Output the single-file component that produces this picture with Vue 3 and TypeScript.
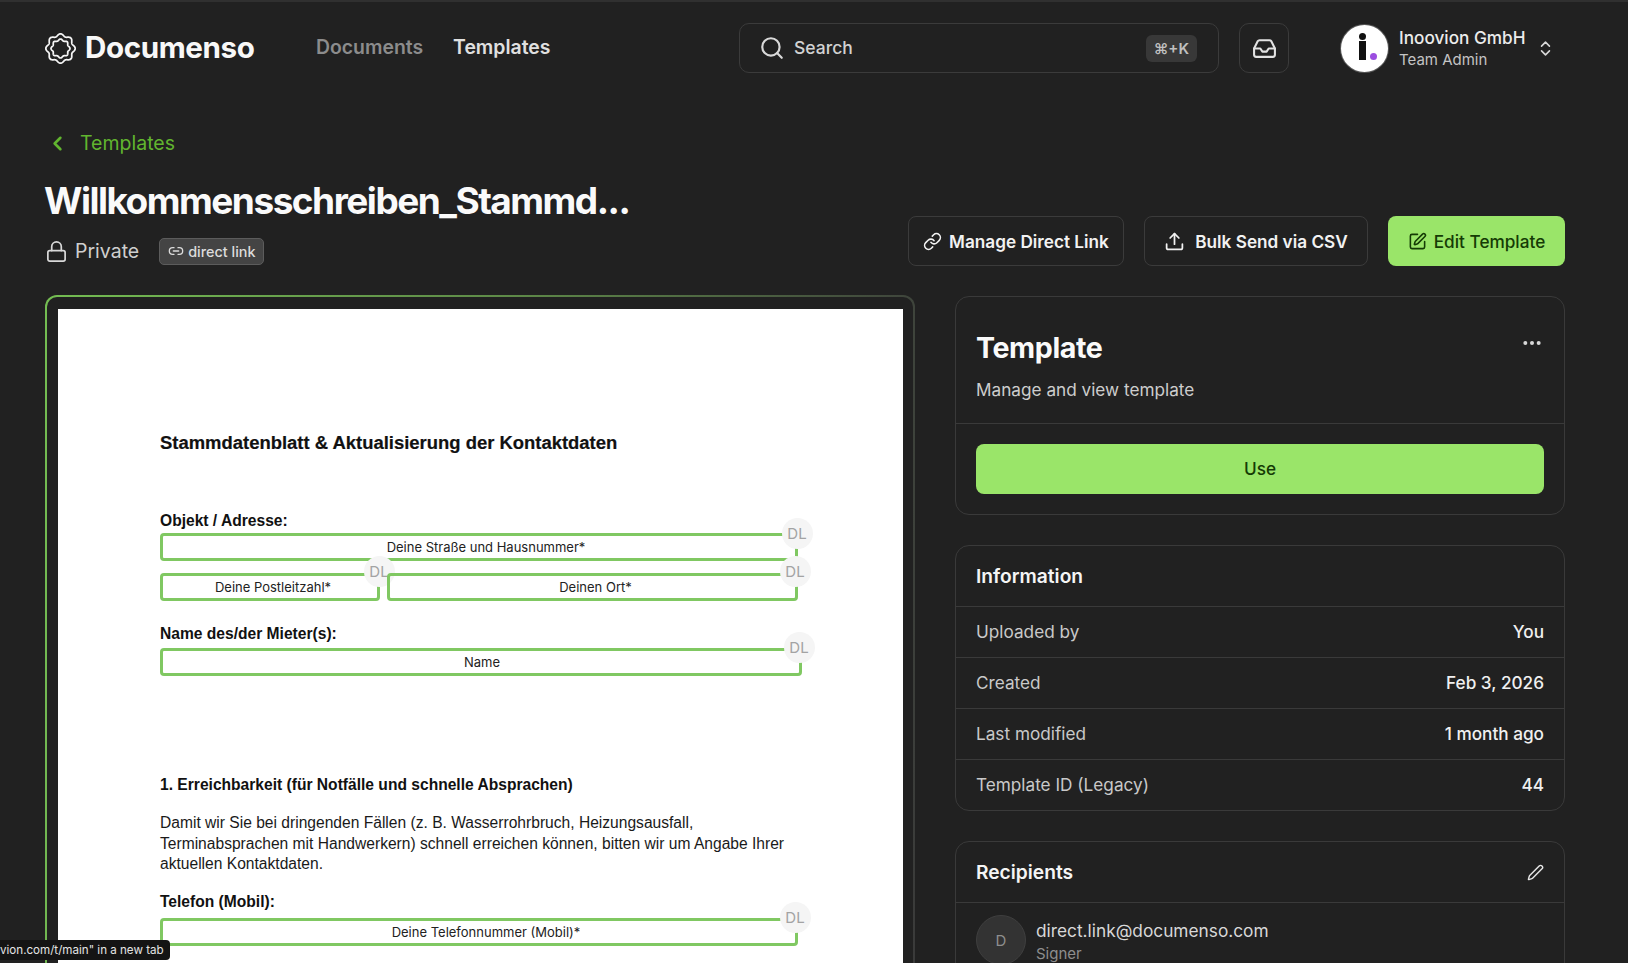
<script setup lang="ts">
interface InfoRow {
  label: string
  value: string
}

const infoRows: InfoRow[] = [
  { label: 'Uploaded by', value: 'You' },
  { label: 'Created', value: 'Feb 3, 2026' },
  { label: 'Last modified', value: '1 month ago' },
  { label: 'Template ID (Legacy)', value: '44' },
]

// wavy ring used by the logo
function wavyRing(radius: number, depth: number, lobes: number, phase = 0): string {
  const pts: string[] = []
  for (let i = 0; i < 180; i++) {
    const a = (i / 180) * Math.PI * 2
    const r = radius + depth * Math.cos(lobes * a + phase)
    pts.push(`${(16 + r * Math.sin(a)).toFixed(2)} ${(16 - r * Math.cos(a)).toFixed(2)}`)
  }
  return `M${pts.join('L')}Z`
}

const logoOuter = wavyRing(14, 1.2, 8)
const logoInner = wavyRing(9, 0.8, 8)
</script>

<template>
  <div class="page">
    <header class="header">
      <div class="brand">
        <svg class="logo" viewBox="0 0 32 32" fill="none" stroke="currentColor" stroke-width="1.8">
          <path :d="logoOuter" />
          <path :d="logoInner" />
        </svg>
        <span class="brand-name">Documenso</span>
      </div>
      <nav class="nav">
        <a class="nav-link muted">Documents</a>
        <a class="nav-link">Templates</a>
      </nav>
      <div class="search">
        <svg class="ico ico-search" viewBox="0 0 24 24"><circle cx="11" cy="11" r="8" /><path d="m21 21-4.3-4.3" /></svg>
        <span class="search-label">Search</span>
        <kbd class="kbd">⌘+K</kbd>
      </div>
      <button class="icon-btn">
        <svg class="ico ico-inbox" viewBox="0 0 24 24">
          <polyline points="22 12 16 12 14 15 10 15 8 12 2 12" />
          <path d="M5.45 5.11 2 12v6a2 2 0 0 0 2 2h16a2 2 0 0 0 2-2v-6l-3.45-6.89A2 2 0 0 0 16.76 4H7.24a2 2 0 0 0-1.79 1.11z" />
        </svg>
      </button>
      <div class="user">
        <div class="user-avatar">
          <span class="i-stem"></span>
          <span class="i-dot"></span>
          <span class="i-purple"></span>
        </div>
        <div class="user-text">
          <div class="user-name">Inoovion GmbH</div>
          <div class="user-role">Team Admin</div>
        </div>
        <svg class="ico ico-updown" viewBox="0 0 24 24"><path d="m7 15 5 5 5-5" /><path d="m7 9 5-5 5 5" /></svg>
      </div>
    </header>

    <main class="main">
      <a class="back">
        <svg class="ico ico-back" viewBox="0 0 24 24"><path d="m15 18-6-6 6-6" /></svg>
        <span>Templates</span>
      </a>

      <div class="title-row">
        <div>
          <h1 class="title">Willkommensschreiben_Stammd...</h1>
          <div class="meta">
            <svg class="ico ico-lock" viewBox="0 0 24 24"><rect x="3" y="11" width="18" height="11" rx="2" ry="2" /><path d="M7 11V7a5 5 0 0 1 10 0v4" /></svg>
            <span class="meta-text">Private</span>
            <span class="badge">
              <svg class="ico ico-badge" viewBox="0 0 24 24"><path d="M9 17H7A5 5 0 0 1 7 7h2" /><path d="M15 7h2a5 5 0 1 1 0 10h-2" /><line x1="8" y1="12" x2="16" y2="12" /></svg>
              direct link
            </span>
          </div>
        </div>
        <div class="actions">
          <button class="btn btn-link">
            <svg class="ico ico-btn" viewBox="0 0 24 24"><path d="M10 13a5 5 0 0 0 7.54.54l3-3a5 5 0 0 0-7.07-7.07l-1.72 1.71" /><path d="M14 11a5 5 0 0 0-7.54-.54l-3 3a5 5 0 0 0 7.07 7.07l1.71-1.71" /></svg>
            Manage Direct Link
          </button>
          <button class="btn btn-bulk">
            <svg class="ico ico-btn" viewBox="0 0 24 24"><path d="M21 15v4a2 2 0 0 1-2 2H5a2 2 0 0 1-2-2v-4" /><polyline points="17 8 12 3 7 8" /><line x1="12" y1="3" x2="12" y2="15" /></svg>
            Bulk Send via CSV
          </button>
          <button class="btn btn-primary btn-edit">
            <svg class="ico ico-btn" viewBox="0 0 24 24"><path d="M12 3H5a2 2 0 0 0-2 2v14a2 2 0 0 0 2 2h14a2 2 0 0 0 2-2v-7" /><path d="M18.375 2.625a1 1 0 0 1 3 3l-9.013 9.014a2 2 0 0 1-.853.505l-2.873.84a.5.5 0 0 1-.62-.62l.84-2.873a2 2 0 0 1 .506-.852z" /></svg>
            Edit Template
          </button>
        </div>
      </div>

      <div class="columns">
        <section class="preview">
          <div class="sheet">
            <div class="doc-title">Stammdatenblatt &amp; Aktualisierung der Kontaktdaten</div>

            <div class="doc-label first">Objekt / Adresse:</div>
            <div class="field w-street">Deine Straße und Hausnummer*<span class="dl">DL</span></div>
            <div class="field-row">
              <div class="field w-zip">Deine Postleitzahl*<span class="dl">DL</span></div>
              <div class="field w-city">Deinen Ort*<span class="dl">DL</span></div>
            </div>

            <div class="doc-label second">Name des/der Mieter(s):</div>
            <div class="field w-name">Name<span class="dl">DL</span></div>

            <div class="doc-label third">1. Erreichbarkeit (für Notfälle und schnelle Absprachen)</div>
            <p class="doc-text">
              Damit wir Sie bei dringenden Fällen (z. B. Wasserrohrbruch, Heizungsausfall,<br />
              Terminabsprachen mit Handwerkern) schnell erreichen können, bitten wir um Angabe Ihrer<br />
              aktuellen Kontaktdaten.
            </p>

            <div class="doc-label fourth">Telefon (Mobil):</div>
            <div class="field w-tel">Deine Telefonnummer (Mobil)*<span class="dl">DL</span></div>
          </div>
        </section>

        <aside class="side">
          <section class="card">
            <div class="card-head">
              <div>
                <h2 class="card-title">Template</h2>
                <p class="card-sub">Manage and view template</p>
              </div>
              <svg class="ico-more" viewBox="0 0 24 24" fill="currentColor"><circle cx="4" cy="12" r="2.4" /><circle cx="12" cy="12" r="2.4" /><circle cx="20" cy="12" r="2.4" /></svg>
            </div>
            <div class="card-body">
              <button class="btn btn-primary btn-use">Use</button>
            </div>
          </section>

          <section class="card">
            <h3 class="section-head">Information</h3>
            <div v-for="row in infoRows" :key="row.label" class="info-row">
              <span class="info-label">{{ row.label }}</span>
              <span class="info-value">{{ row.value }}</span>
            </div>
          </section>

          <section class="card card-open">
            <div class="section-head">
              <h3 class="section-title">Recipients</h3>
              <svg class="ico ico-pencil" viewBox="0 0 24 24"><path d="M21.174 6.812a1 1 0 0 0-3.986-3.987L3.842 16.174a2 2 0 0 0-.5.83l-1.321 4.352a.5.5 0 0 0 .623.622l4.353-1.32a2 2 0 0 0 .83-.497z" /></svg>
            </div>
            <div class="recipient">
              <div class="rec-avatar">D</div>
              <div class="rec-text">
                <div class="rec-mail">direct.link@documenso.com</div>
                <div class="rec-role">Signer</div>
              </div>
            </div>
          </section>
        </aside>
      </div>
    </main>

    <div class="status-tip">vion.com/t/main" in a new tab</div>
  </div>
</template>

<style scoped>
.page {
  position: relative; height: 963px; overflow: hidden; background: #212121; color: #f5f5f5;
  border-top: 2px solid #303030; box-sizing: border-box;
  font-family: Inter, "Liberation Sans", sans-serif;
}
h1, h2, h3, p { margin: 0; }
button { font-family: inherit; cursor: pointer; }
.ico { fill: none; stroke: currentColor; stroke-width: 2; stroke-linecap: round; stroke-linejoin: round; flex: none; }

.header { display: flex; align-items: center; height: 92px; padding-left: 45px; }
.brand { display: flex; align-items: center; gap: 9px; width: 271px; flex: none; }
.logo { width: 31px; height: 31px; color: #f5f5f5; flex: none; }
.brand-name { font-size: 29.6px; font-weight: 700; letter-spacing: -0.4px; color: #f8f8f8; position: relative; top: -1px; }
.nav { display: flex; gap: 30px; width: 423px; flex: none; position: relative; top: -1px; }
.nav-link { font-size: 19.4px; font-weight: 600; color: #e0e0e0; }
.nav-link.muted { color: #8c8c8c; }
.search {
  display: flex; align-items: center; width: 480px; height: 50px; flex: none; box-sizing: border-box;
  border: 1px solid #3b3b3b; border-radius: 10px; padding: 0 21px 0 19px;
}
.ico-search { width: 26px; height: 26px; color: #d9d9d9; }
.search-label { margin-left: 9px; font-size: 17.5px; font-weight: 500; color: #d2d2d2; position: relative; top: -1px; }
.kbd {
  margin-left: auto; background: #383838; border-radius: 6px; padding: 4px 8px; color: #c0c0c0;
  font-family: inherit; font-size: 15px; font-weight: 600;
}
.icon-btn {
  display: flex; align-items: center; justify-content: center; width: 50px; height: 50px; margin-left: 20px;
  flex: none; padding: 0; background: none; border: 1px solid #3b3b3b; border-radius: 10px; color: #e2e2e2;
}
.ico-inbox { width: 25px; height: 25px; }
.user { display: flex; align-items: center; margin-left: 52px; }
.user-avatar {
  position: relative; width: 47px; height: 47px; border-radius: 50%; background: #fff; flex: none;
  box-shadow: 0 0 0 1px #555;
}
.i-stem { position: absolute; left: 18px; top: 16px; width: 7px; height: 19px; background: #111; }
.i-dot { position: absolute; left: 18px; top: 8px; width: 7px; height: 7px; border-radius: 50%; background: #111; }
.i-purple { position: absolute; left: 28.5px; top: 28px; width: 7px; height: 7px; border-radius: 50%; background: #9b4de0; }
.user-text { margin-left: 11px; width: 137px; position: relative; top: 1px; }
.user-name { font-size: 17.2px; line-height: 22px; font-weight: 500; color: #ececec; }
.user-role { font-size: 15px; line-height: 22px; color: #c4c4c4; }
.ico-updown { width: 19px; height: 19px; color: #d8d8d8; }

.main { padding: 0 63px 0 45px; }
.back { display: flex; align-items: center; gap: 11px; margin-top: 36px; height: 26px; font-size: 19.5px; color: #61b52f; }
.ico-back { width: 23px; height: 23px; stroke-width: 2.7; margin-left: 1px; }
.title-row { display: flex; justify-content: space-between; align-items: flex-end; margin-top: 22px; }
.title { font-size: 37px; line-height: 46px; font-weight: 700; letter-spacing: -1.5px; color: #fafafa; white-space: nowrap; margin-left: -1px; }
.meta { display: flex; align-items: center; height: 28px; margin-top: 13px; margin-bottom: 1px; }
.ico-lock { width: 23px; height: 23px; color: #d8d8d8; margin-right: 7px; stroke-width: 1.8; }
.meta-text { font-size: 19.5px; color: #cfcfcf; }
.badge {
  display: flex; align-items: center; gap: 4px; height: 27px; margin-left: 20px; padding: 0 8px; box-sizing: border-box;
  background: #444; border: 1px solid #5c5c5c; border-radius: 5px; font-size: 14.4px; font-weight: 500; color: #dcdcdc;
}
.ico-badge { width: 16px; height: 16px; }
.actions { display: flex; gap: 20px; }
.btn {
  display: flex; align-items: center; justify-content: center; gap: 7px; height: 50px; box-sizing: border-box;
  background: none; border: 1px solid #3b3b3b; border-radius: 8px; color: #f2f2f2; font-size: 17.2px; font-weight: 600;
}
.btn-link { width: 216px; }
.btn-bulk { width: 224px; gap: 10px; }
.btn-edit { width: 177px; }
.btn-primary { background: #9ae569; border: none; color: #153b05; font-weight: 500; }
.ico-btn { width: 19px; height: 19px; }
.btn-bulk .ico-btn { width: 21px; height: 21px; }

.columns { display: flex; gap: 40px; margin-top: 29px; }
.preview {
  width: 870px; height: 700px; flex: none; box-sizing: border-box; padding: 12px 10px 0 11px;
  border: 2px solid transparent; border-radius: 12px;
  background: linear-gradient(#212121, #212121) padding-box, linear-gradient(95deg, #74bd52 0%, #5e8a48 50%, #3a3a3a 100%) border-box;
}
.sheet { height: 660px; background: #fff; color: #111; padding: 123px 0 0 102px; font-family: "Liberation Sans", Arial, sans-serif; }
.doc-title { font-size: 18.45px; line-height: 22px; font-weight: 700; -webkit-text-stroke: 0.2px #111; }
.doc-label { font-size: 15.6px; line-height: 20px; font-weight: 700; }
.doc-label.first { margin: 57px 0 2px; }
.doc-label.second { margin: 23px 0 4px; }
.doc-label.third { margin: 99px 0 0; }
.doc-label.fourth { margin: 17px 0 6px; }
.doc-text { margin-top: 18px; font-size: 15.6px; line-height: 20.5px; color: #1a1a1a; }
.field {
  position: relative; height: 28px; box-sizing: border-box; border: 3px solid #80c862; border-radius: 4px;
  display: flex; align-items: center; justify-content: center; font-family: Inter, "Liberation Sans", sans-serif;
  font-size: 13px; color: #222;
}
.field-row { display: flex; gap: 7px; margin-top: 12px; }
.w-street { width: 638px; padding-left: 14px; }
.w-zip { width: 220px; padding-left: 6px; }
.w-city { width: 411px; padding-left: 6px; }
.w-name { width: 642px; padding-left: 2px; }
.w-tel { width: 638px; padding-left: 14px; padding-top: 1px; }
.dl {
  position: absolute; right: -15.5px; top: -18.5px; width: 31px; height: 31px; border-radius: 50%;
  display: flex; align-items: center; justify-content: center;
  background: #f5f5f5; color: #a3a3a3; font-size: 15px;
}
.w-street .dl { right: -17.5px; }
.w-zip .dl { right: -17.5px; top: -20.5px; }
.w-city .dl { top: -20.5px; }
.w-name .dl { top: -19.5px; }

.side { width: 610px; flex: none; display: flex; flex-direction: column; gap: 30px; margin-top: 1px; }
.card { border: 1px solid #3a3a3a; border-radius: 14px; }
.card-open { height: 200px; }
.card-head { display: flex; justify-content: space-between; align-items: flex-start; height: 127px; box-sizing: border-box; padding: 33px 22px 0 20px; border-bottom: 1px solid #3a3a3a; }
.card-title { font-size: 28.6px; line-height: 36px; font-weight: 700; letter-spacing: -0.4px; color: #fafafa; }
.card-sub { margin-top: 12px; font-size: 17.2px; line-height: 24px; color: #cdcdcd; }
.ico-more { width: 20px; height: 20px; color: #d8d8d8; margin-top: 3px; }
.card-body { padding: 20px; }
.btn-use { width: 100%; border-radius: 8px; font-size: 17.2px; padding-bottom: 3px; }
.section-head { display: flex; justify-content: space-between; align-items: center; height: 60px; box-sizing: border-box; padding: 0 20px; font-size: 19.2px; font-weight: 600; color: #f5f5f5; line-height: 60px; }
.section-title { font-size: 19.2px; font-weight: 600; }
.ico-pencil { width: 17px; height: 17px; color: #e8e8e8; }
.info-row { display: flex; justify-content: space-between; align-items: center; height: 51px; box-sizing: border-box; padding: 0 20px 2px; border-top: 1px solid #3a3a3a; font-size: 17.2px; }
.info-label { color: #c9c9c9; }
.info-value { color: #f0f0f0; font-weight: 500; }
.recipient { display: flex; gap: 10px; padding: 12px 20px; border-top: 1px solid #3a3a3a; }
.rec-avatar {
  width: 50px; height: 50px; border-radius: 50%; background: #333; border: 1px solid #3f3f3f; box-sizing: border-box;
  display: flex; align-items: center; justify-content: center; color: #8e8e8e; font-size: 15px; flex: none;
}
.rec-text { padding-top: 3px; }
.rec-mail { font-size: 17.3px; line-height: 26px; color: #d8d8d8; }
.rec-role { font-size: 15px; line-height: 20px; color: #8e8e8e; }

.status-tip {
  position: absolute; left: 0; top: 938px; height: 20px; width: 170px; box-sizing: border-box;
  background: #141414; color: #e4e4e4; font-size: 11.6px; line-height: 20px; border-radius: 0 4px 4px 0; white-space: nowrap;
}
</style>

<style>
html, body { margin: 0; background: #212121; }
</style>
